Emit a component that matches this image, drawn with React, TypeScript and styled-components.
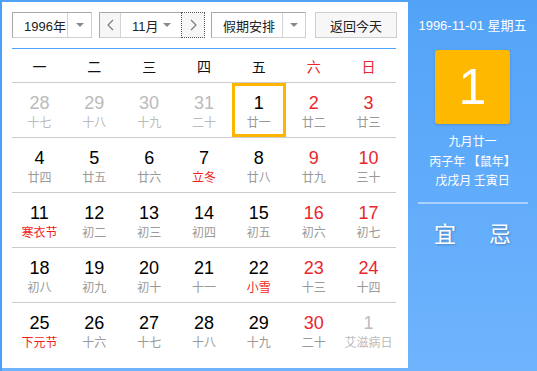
import React from "react";
import styled, { createGlobalStyle } from "styled-components";

const Global = createGlobalStyle`
  html, body { margin: 0; padding: 0; background: #fff; }
  body { font-family: "Liberation Sans", Arial, "Noto Sans CJK SC", sans-serif; }
  * { box-sizing: border-box; }
`;

const Frame = styled.div`
  width: 537px;
  height: 371px;
  display: flex;
  background: linear-gradient(180deg, #52a3f8 0%, #6fb4fd 100%);
  border-left: 2px solid #4e9ff4;
`;

const Main = styled.div`
  width: 406px;
  height: 366px;
  margin-top: 2px;
  background: #fff;
  padding: 10px 10px 0 10px;
  display: flex;
  flex-direction: column;
`;

const Toolbar = styled.div`
  display: flex;
  align-items: center;
  height: 26px;
`;

const SelectBox = styled.div<{ $w: number; $text: number; $ml?: number }>`
  width: ${(p) => p.$w}px;
  margin-left: ${(p) => p.$ml ?? 0}px;
  height: 26px;
  border: 1px solid #a9a9a9;
  border-right-color: #cfcfcf;
  border-bottom-color: #cfcfcf;
  display: grid;
  grid-template-columns: ${(p) => p.$text}px 1fr;
  background: #fff;
  font-size: 13px;
  color: #222;
`;

const SelectText = styled.div`
  display: flex;
  align-items: center;
  padding-left: 11px;
  border-right: 1px solid #d4d4d4;
  font-family: "Liberation Sans", "Noto Sans CJK SC", sans-serif;
`;

const Caret = styled.div`
  display: flex;
  align-items: center;
  justify-content: center;
  &::after {
    content: "";
    border-left: 4px solid transparent;
    border-right: 4px solid transparent;
    border-top: 4px solid #8a8a8a;
  }
`;

const MonthGroup = styled.div`
  margin-left: 7px;
  width: 106px;
  height: 26px;
  border: 1px solid #a9a9a9;
  border-right-color: #cfcfcf;
  border-bottom-color: #cfcfcf;
  display: grid;
  grid-template-columns: 21px 60px 1fr;
  font-size: 13px;
  color: #222;
`;

const NavBtn = styled.div<{ $focus?: boolean }>`
  display: flex;
  align-items: center;
  justify-content: center;
  background: #f6f6f6;
  border-right: ${(p) => (p.$focus ? "none" : "1px solid #d4d4d4")};
  outline: ${(p) => (p.$focus ? "1px dotted #555" : "none")};
  outline-offset: -1px;
  margin: ${(p) => (p.$focus ? "-1px -1px -1px 0" : "0")};
  color: #777;
`;

const MonthText = styled.div`
  display: flex;
  align-items: center;
  justify-content: space-between;
  padding: 0 10px 0 11px;
`;

const MiniCaret = styled.span`
  border-left: 4px solid transparent;
  border-right: 4px solid transparent;
  border-top: 4px solid #8a8a8a;
`;

const ReturnBtn = styled.div`
  margin-left: 9px;
  width: 82px;
  height: 26px;
  border: 1px solid #cfcfcf;
  background: #f7f7f7;
  display: flex;
  align-items: center;
  justify-content: center;
  font-size: 13px;
  color: #222;
  font-family: "Noto Sans CJK SC", sans-serif;
`;

const BlueRule = styled.div`
  margin-top: 10px;
  height: 1px;
  background: #4ea6f8;
  width: 384px;
`;

const Grid = styled.div`
  width: 384px;
  display: grid;
  grid-template-columns: repeat(7, 1fr);
`;

const HeadCell = styled.div<{ $red?: boolean }>`
  height: 34px;
  border-bottom: 1px solid #cccccc;
  display: flex;
  align-items: center;
  justify-content: center;
  font-size: 14px;
  color: ${(p) => (p.$red ? "#e8262c" : "#111")};
  font-family: "Noto Sans CJK SC", sans-serif;
`;

const DayCell = styled.div<{ $last?: boolean; $sel?: boolean }>`
  position: relative;
  height: 55px;
  border-bottom: ${(p) => (p.$last ? "none" : "1px solid #cccccc")};
  display: flex;
  flex-direction: column;
  align-items: center;
  padding-top: 10px;
  &::before {
    content: "";
    display: ${(p) => (p.$sel ? "block" : "none")};
    position: absolute;
    left: 1px;
    right: 0;
    top: 0;
    bottom: 0;
    border: 3px solid #ffb400;
  }
`;

const DayNum = styled.div<{ $c: string }>`
  font-size: 18px;
  line-height: 20px;
  color: ${(p) => p.$c};
  font-family: "Liberation Sans", Arial, sans-serif;
`;

const Lunar = styled.div<{ $c: string }>`
  font-size: 12px;
  line-height: 16px;
  margin-top: 1px;
  color: ${(p) => p.$c};
  font-family: "Noto Sans CJK SC", sans-serif;
`;

const Side = styled.div`
  flex: 1;
  display: flex;
  flex-direction: column;
  align-items: center;
  color: #fff;
  font-family: "Noto Sans CJK SC", sans-serif;
`;

const SideDate = styled.div`
  margin-top: 17px;
  font-size: 13px;
  line-height: 18px;
  font-family: "Liberation Sans", Arial, "Noto Sans CJK SC", sans-serif;
`;

const BigDay = styled.div`
  margin-top: 15px;
  width: 75px;
  height: 74px;
  border-radius: 3px;
  background: #ffb800;
  box-shadow: 0 1px 3px rgba(0, 0, 0, 0.15);
  display: flex;
  align-items: center;
  justify-content: center;
  font-size: 50px;
  font-family: "Liberation Sans", Arial, sans-serif;
  color: #fff;
`;

const LunarInfo = styled.div`
  margin-top: 7px;
  font-size: 12px;
  line-height: 19.5px;
  text-align: center;
`;

const SideRule = styled.div`
  margin-top: 12px;
  width: 110px;
  height: 2px;
  background: rgba(255, 255, 255, 0.45);
`;

const YiJi = styled.div`
  margin-top: 14px;
  display: flex;
  gap: 33px;
  font-size: 22px;
  line-height: 28px;
  text-shadow: 1px 1px 2px rgba(0, 0, 0, 0.25);
`;

type Day = { n: number; l: string; kind?: "other" | "weekend"; hol?: boolean; sel?: boolean };

const rows: Day[][] = [
  [
    { n: 28, l: "十七", kind: "other" },
    { n: 29, l: "十八", kind: "other" },
    { n: 30, l: "十九", kind: "other" },
    { n: 31, l: "二十", kind: "other" },
    { n: 1, l: "廿一", sel: true },
    { n: 2, l: "廿二", kind: "weekend" },
    { n: 3, l: "廿三", kind: "weekend" },
  ],
  [
    { n: 4, l: "廿四" },
    { n: 5, l: "廿五" },
    { n: 6, l: "廿六" },
    { n: 7, l: "立冬", hol: true },
    { n: 8, l: "廿八" },
    { n: 9, l: "廿九", kind: "weekend" },
    { n: 10, l: "三十", kind: "weekend" },
  ],
  [
    { n: 11, l: "寒衣节", hol: true },
    { n: 12, l: "初二" },
    { n: 13, l: "初三" },
    { n: 14, l: "初四" },
    { n: 15, l: "初五" },
    { n: 16, l: "初六", kind: "weekend" },
    { n: 17, l: "初七", kind: "weekend" },
  ],
  [
    { n: 18, l: "初八" },
    { n: 19, l: "初九" },
    { n: 20, l: "初十" },
    { n: 21, l: "十一" },
    { n: 22, l: "小雪", hol: true },
    { n: 23, l: "十三", kind: "weekend" },
    { n: 24, l: "十四", kind: "weekend" },
  ],
  [
    { n: 25, l: "下元节", hol: true },
    { n: 26, l: "十六" },
    { n: 27, l: "十七" },
    { n: 28, l: "十八" },
    { n: 29, l: "十九" },
    { n: 30, l: "二十", kind: "weekend" },
    { n: 1, l: "艾滋病日", kind: "other" },
  ],
];

const heads = ["一", "二", "三", "四", "五", "六", "日"];

const RED = "#e8262c";

function numColor(d: Day) {
  if (d.kind === "other") return "#bbbbbb";
  if (d.kind === "weekend") return RED;
  return "#000";
}
function lunarColor(d: Day) {
  if (d.kind === "other") return "#bbbbbb";
  if (d.hol) return "#f01e1e";
  return "#999999";
}

const Chevron = ({ dir }: { dir: "l" | "r" }) => (
  <svg width="7" height="12" viewBox="0 0 7 12">
    <path
      d={dir === "l" ? "M6 1 L1 6 L6 11" : "M1 1 L6 6 L1 11"}
      fill="none"
      stroke="#777"
      strokeWidth="1.1"
    />
  </svg>
);

export default function App() {
  return (
    <>
      <Global />
      <Frame>
        <Main>
          <Toolbar>
            <SelectBox $w={80} $text={55}>
              <SelectText>1996年</SelectText>
              <Caret />
            </SelectBox>
            <MonthGroup>
              <NavBtn>
                <Chevron dir="l" />
              </NavBtn>
              <MonthText>
                <span>11月</span>
                <MiniCaret />
              </MonthText>
              <NavBtn $focus>
                <Chevron dir="r" />
              </NavBtn>
            </MonthGroup>
            <SelectBox $w={95} $text={71} $ml={6}>
              <SelectText>假期安排</SelectText>
              <Caret />
            </SelectBox>
            <ReturnBtn>返回今天</ReturnBtn>
          </Toolbar>
          <BlueRule />
          <Grid>
            {heads.map((h, i) => (
              <HeadCell key={h} $red={i >= 5}>
                {h}
              </HeadCell>
            ))}
            {rows.map((r, ri) =>
              r.map((d, ci) => (
                <DayCell key={`${ri}-${ci}`} $last={ri === rows.length - 1} $sel={d.sel}>
                  <DayNum $c={numColor(d)}>{d.n}</DayNum>
                  <Lunar $c={lunarColor(d)}>{d.l}</Lunar>
                </DayCell>
              ))
            )}
          </Grid>
        </Main>
        <Side>
          <SideDate>1996-11-01 星期五</SideDate>
          <BigDay>1</BigDay>
          <LunarInfo>
            九月廿一
            <br />
            丙子年 【鼠年】
            <br />
            戊戌月 壬寅日
          </LunarInfo>
          <SideRule />
          <YiJi>
            <span>宜</span>
            <span>忌</span>
          </YiJi>
        </Side>
      </Frame>
    </>
  );
}
